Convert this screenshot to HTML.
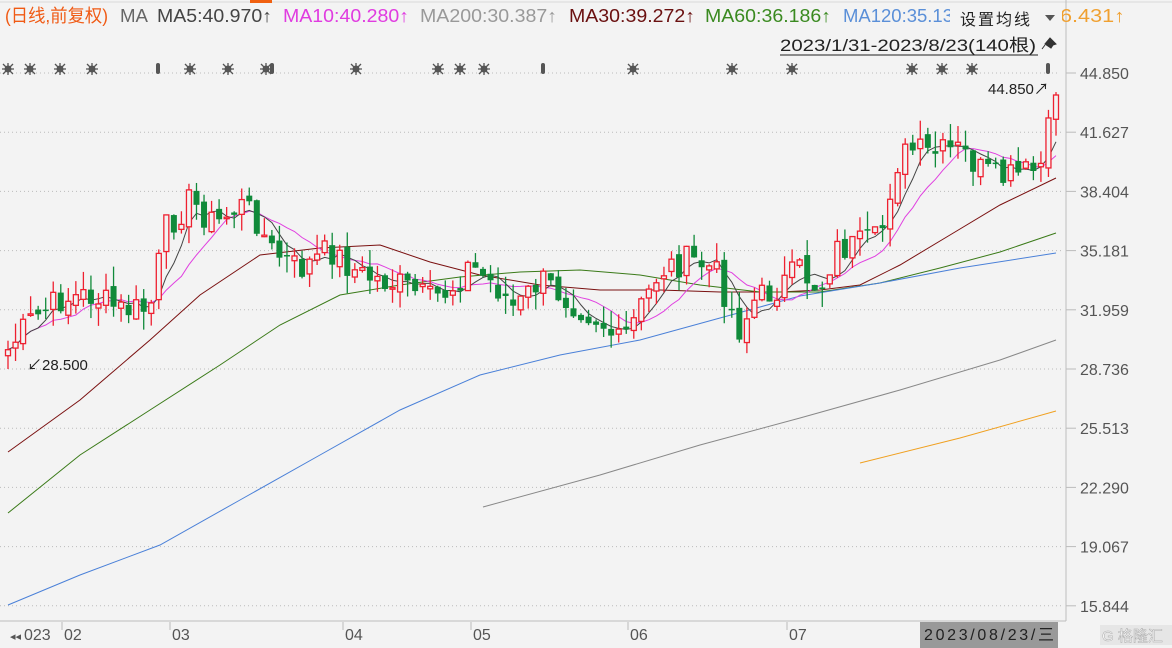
<!DOCTYPE html>
<html><head><meta charset="utf-8"><style>
body{margin:0;width:1172px;height:648px;background:#f3f3f3;overflow:hidden;font-family:"Liberation Sans","Noto Sans CJK SC",sans-serif}
svg{position:absolute;left:0;top:0}
</style></head><body>
<svg id="s" width="1172" height="648" xmlns="http://www.w3.org/2000/svg" font-family="Liberation Sans, Noto Sans CJK SC, sans-serif">
<rect x="0" y="0" width="1172" height="648" fill="#f3f3f3"/>
<line x1="0" y1="2" x2="1172" y2="2" stroke="#d8d8d8"/>
<rect x="250" y="0" width="22" height="3" fill="#f06010"/>
<line x1="1066" y1="0" x2="1066" y2="621" stroke="#bdbdbd"/>
<line x1="0" y1="621" x2="1066" y2="621" stroke="#bdbdbd"/>
<g id="grid"></g>
<g id="lines"></g>
<g id="candles"></g>
<g font-size="18">
<text x="5" y="22" fill="#f05a14" textLength="103" lengthAdjust="spacingAndGlyphs">(日线,前复权)</text>
<text x="120" y="22" fill="#666" textLength="28" lengthAdjust="spacingAndGlyphs">MA</text>
<text x="157" y="22" fill="#444" textLength="115" lengthAdjust="spacingAndGlyphs">MA5:40.970↑</text>
<text x="283" y="22" fill="#e03ce0" textLength="126" lengthAdjust="spacingAndGlyphs">MA10:40.280↑</text>
<text x="420" y="22" fill="#999" textLength="137" lengthAdjust="spacingAndGlyphs">MA200:30.387↑</text>
<text x="569" y="22" fill="#6a1010" textLength="126" lengthAdjust="spacingAndGlyphs">MA30:39.272↑</text>
<text x="705" y="22" fill="#3a8a20" textLength="126" lengthAdjust="spacingAndGlyphs">MA60:36.186↑</text>
<text x="843" y="22" fill="#5a8fd8" textLength="110" lengthAdjust="spacingAndGlyphs">MA120:35.13</text>
<text x="1060" y="22" fill="#f0a030" textLength="65" lengthAdjust="spacingAndGlyphs">6.431↑</text>
</g>
<rect x="950" y="4" width="112" height="28" fill="#f3f3f3"/>
<text x="960" y="25" font-size="16" fill="#222" textLength="70">设置均线</text>
<path d="M1045 15 l10 0 l-5 6z" fill="#555"/>
<text x="780" y="51" font-size="17" fill="#222" textLength="256" lengthAdjust="spacingAndGlyphs">2023/1/31-2023/8/23(140根)</text>
<line x1="780" y1="55" x2="1038" y2="55" stroke="#222"/>
<path d="M1045 44 l5 -6 l6 6 l-3 1 l-2 3 z M1045 45 l-3 4" fill="#333" stroke="#333"/>
<line x1="0" y1="73" x2="1060" y2="73" stroke="#bbb" stroke-dasharray="1 3"/>
<g id="stars" fill="#555"></g>
<text x="988" y="94" font-size="15" fill="#222">44.850↗</text>
<text x="27" y="370" font-size="15" fill="#222">↙28.500</text>
<g id="axis" font-size="16" fill="#555"></g>
<g font-size="16" fill="#555">
<text x="10" y="640" font-size="11">◂◂</text>
<text x="24" y="640">023</text><text x="64" y="640">02</text><text x="172" y="640">03</text>
<text x="345" y="640">04</text><text x="473" y="640">05</text><text x="630" y="640">06</text><text x="789" y="640">07</text>
</g>
<g stroke="#bbb"><line x1="62" y1="622" x2="62" y2="630"/><line x1="170" y1="622" x2="170" y2="630"/><line x1="343" y1="622" x2="343" y2="630"/><line x1="471" y1="622" x2="471" y2="630"/><line x1="628" y1="622" x2="628" y2="630"/><line x1="787" y1="622" x2="787" y2="630"/></g>
<rect x="920" y="622" width="138" height="26" fill="#999"/>
<text x="924" y="640" font-size="16" fill="#222" textLength="130">2023/08/23/三</text>
<rect x="1100" y="625" width="72" height="20" fill="#ddd" opacity="0.6"/>
<text x="1102" y="641" font-size="15" fill="#fff" stroke="#aaa" stroke-width="0.5">G 格隆汇</text>
</svg>
<script>
var NS="http://www.w3.org/2000/svg";
function el(p,t,a){var e=document.createElementNS(NS,t);for(var k in a)e.setAttribute(k,a[k]);document.getElementById(p).appendChild(e);return e;}
var labels=["44.850","41.627","38.404","35.181","31.959","28.736","25.513","22.290","19.067","15.844"];
labels.forEach(function(l,i){var y=73+i*59.2;if(i>0)el("grid","line",{x1:0,y1:y,x2:1062,y2:y,stroke:"#bbb","stroke-dasharray":"1 3"});
el("grid","line",{x1:1066,y1:y,x2:1076,y2:y,stroke:"#bbb"});var t=el("axis","text",{x:1080,y:y+6});t.textContent=l;});
[8,30,60,92,158,190,228,266,272,356,438,460,484,543,633,732,792,912,942,972,1048].forEach(function(x){
 if([158,272,543,1048].indexOf(x)>=0)el("stars","rect",{x:x-2,y:63,width:4,height:11,rx:2});
 else{el("stars","circle",{cx:x,cy:69,r:3.5});el("stars","path",{d:"M"+(x-6)+" 69h12M"+x+" 63v12M"+(x-5)+" 64l10 10M"+(x+5)+" 64l-10 10",stroke:"#555","stroke-width":1.3});}
});
function poly(pts,c){el("lines","polyline",{points:pts,fill:"none",stroke:c,"stroke-width":1});}
poly("8,452 80,400 150,340 200,295 260,255 320,248 380,245 430,262 480,275 540,285 600,290 660,290 720,292 780,292 820,290 860,285 900,265 950,235 1000,205 1056,178","#7a1010");
poly("8,513 80,455 150,410 220,365 280,325 340,295 400,285 460,277 520,272 580,270 640,275 700,285 760,292 820,292 880,283 940,268 1000,252 1056,233","#3a7a18");
poly("8,605 80,575 160,545 240,500 320,455 400,410 480,375 560,355 640,340 720,318 800,296 880,283 960,268 1056,253","#4a80d8");
poly("483,507 600,475 700,445 800,418 900,390 1000,360 1056,340","#888");
poly("860,463 960,438 1056,411","#f0a020");
var kp=[[8,350],[30,322],[60,300],[90,295],[120,310],[150,310],[165,230],[190,200],[215,225],[240,205],[255,215],[270,250],[300,270],[330,250],[360,275],[400,285],[430,300],[450,290],[470,265],[500,290],[515,310],[540,280],[570,300],[600,320],[620,345],[635,320],[660,270],[690,260],[715,270],[740,330],[755,300],[775,290],[800,270],[820,290],[835,250],[860,245],[880,240],[895,165],[910,150],[930,155],[960,150],[980,170],[1000,180],[1020,175],[1040,170],[1048,135],[1056,95]];
function interp(x){for(var i=1;i<kp.length;i++)if(x<=kp[i][0]){var a=kp[i-1],b=kp[i];return a[1]+(b[1]-a[1])*(x-a[0])/(b[0]-a[0]);}return kp[kp.length-1][1];}
var N=140,cl=[],xs=[],seed=7;function rnd(){seed=(seed*9301+49297)%233280;return seed/233280;}
for(var i=0;i<N;i++){var x=8+i*(1048/139);xs.push(x);cl.push(interp(x)+(rnd()-0.5)*30);}
cl[N-1]=95;
var m5=[],m10=[];
for(var i=0;i<N;i++){var s=0,c=0;for(var j=Math.max(0,i-4);j<=i;j++){s+=cl[j];c++;}m5.push(xs[i].toFixed(1)+","+(s/c).toFixed(1));s=0;c=0;for(var j=Math.max(0,i-9);j<=i;j++){s+=cl[j];c++;}m10.push(xs[i].toFixed(1)+","+(s/c).toFixed(1));}
poly(m10.join(" "),"#e040e0");poly(m5.join(" "),"#444");
(function(){
for(var i=0;i<N;i++){var o=i?cl[i-1]+(rnd()-0.5)*10:cl[0]+6,c=cl[i],x=xs[i];
 var up=c<o,tp=Math.min(o,c),bt=Math.max(o,c);if(bt-tp<1.5)bt=tp+1.5;
 var hi=tp-rnd()*20,lo=bt+rnd()*18;var col=up?"#ee2030":"#108a3a";
 el("candles","line",{x1:x,y1:hi,x2:x,y2:lo,stroke:col,"stroke-width":1.3});
 if(up)el("candles","rect",{x:x-2.5,y:tp,width:5,height:bt-tp,fill:"#f3f3f3",stroke:col,"stroke-width":1.3});
 else el("candles","rect",{x:x-3,y:tp,width:6,height:bt-tp,fill:col});}
})();
</script>
</body></html>
